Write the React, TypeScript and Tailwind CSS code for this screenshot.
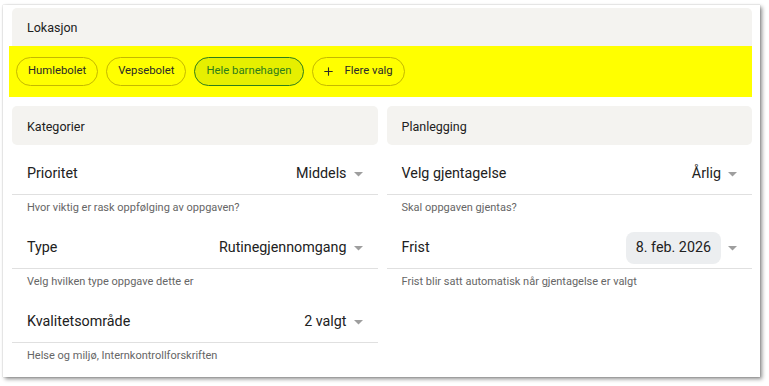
import { Plus } from "lucide-react";

const locations = [
  { name: "Humlebolet", selected: false },
  { name: "Vepsebolet", selected: false },
  { name: "Hele barnehagen", selected: true },
];

function Caret() {
  return (
    <svg width="9" height="5" viewBox="0 0 9 5" className="shrink-0">
      <path d="M0 0 L9 0 L4.5 4.5 Z" fill="#9e9e9e" />
    </svg>
  );
}

function Field({ label, value, help, chip = false }: { label: string; value: string; help: string; chip?: boolean }) {
  return (
    <div>
      <div className="flex h-[43px] items-center justify-between border-b border-[#e0e0e0] pl-[15px] pr-[15px] pt-[2px]">
        <span className="text-[14.3px] text-[#212121]">{label}</span>
        <div className="flex items-center gap-[7px]">
          {chip ? (
            <span className="rounded-[8px] bg-[#eceef0] px-[10px] py-[5px] text-[14.3px] text-[#212121]">{value}</span>
          ) : (
            <span className="text-[14.3px] text-[#212121]">{value}</span>
          )}
          <Caret />
        </div>
      </div>
      <div className="h-[31px] pl-[15px] pt-[6px] text-[11px] leading-[14px] text-[#666]">{help}</div>
    </div>
  );
}

function SectionHeader({ title }: { title: string }) {
  return (
    <div className="flex h-[39px] items-center rounded-[5px] bg-[#f4f3f0] px-[15px] pt-[3px] text-[12.5px] text-[#212121]">
      {title}
    </div>
  );
}

export default function App() {
  return (
    <div className="h-[386px] w-[769px] bg-white pl-[3px] pt-[5px] font-['Roboto',sans-serif]">
      <div className="h-[372px] w-[757px] bg-white pl-[9px] pr-[8px] pt-[3px] shadow-[0_0_1px_rgba(0,0,0,0.3),2px_2px_4px_rgba(0,0,0,0.45)]">
        {/* Lokasjon */}
        <div className="flex h-[38px] items-center rounded-t-[5px] bg-[#f4f3f0] px-[15px] pt-[3px] text-[12.5px] text-[#212121]">
          Lokasjon
        </div>
        <div className="-ml-[3px] flex h-[51px] items-center gap-[8px] bg-[#ffff00] pl-[7px]">
          {locations.map((l) => (
            <span
              key={l.name}
              className={
                l.selected
                  ? "flex h-[29px] items-center rounded-full border border-[#2e7d1a] bg-[#e6ef00] px-[11px] text-[11.3px] text-[#2e7d1a]"
                  : "flex h-[29px] items-center rounded-full border border-[#c4b800] px-[11px] text-[11.3px] text-[#2a2a2a]"
              }
            >
              {l.name}
            </span>
          ))}
          <span className="flex h-[29px] items-center gap-[10px] rounded-full border border-[#c4b800] pl-[9px] pr-[11px] text-[11.3px] text-[#2a2a2a]">
            <Plus size={13} strokeWidth={2} />
            Flere valg
          </span>
        </div>

        {/* Kolonner */}
        <div className="mt-[9px] grid grid-cols-2 gap-[9px]">
          <div>
            <SectionHeader title="Kategorier" />
            <div className="mt-[7px]">
              <Field label="Prioritet" value="Middels" help="Hvor viktig er rask oppfølging av oppgaven?" />
              <Field label="Type" value="Rutinegjennomgang" help="Velg hvilken type oppgave dette er" />
              <Field label="Kvalitetsområde" value="2 valgt" help="Helse og miljø, Internkontrollforskriften" />
            </div>
          </div>
          <div>
            <SectionHeader title="Planlegging" />
            <div className="mt-[7px]">
              <Field label="Velg gjentagelse" value="Årlig" help="Skal oppgaven gjentas?" />
              <Field label="Frist" value="8. feb. 2026" help="Frist blir satt automatisk når gjentagelse er valgt" chip />
            </div>
          </div>
        </div>
      </div>
    </div>
  );
}
